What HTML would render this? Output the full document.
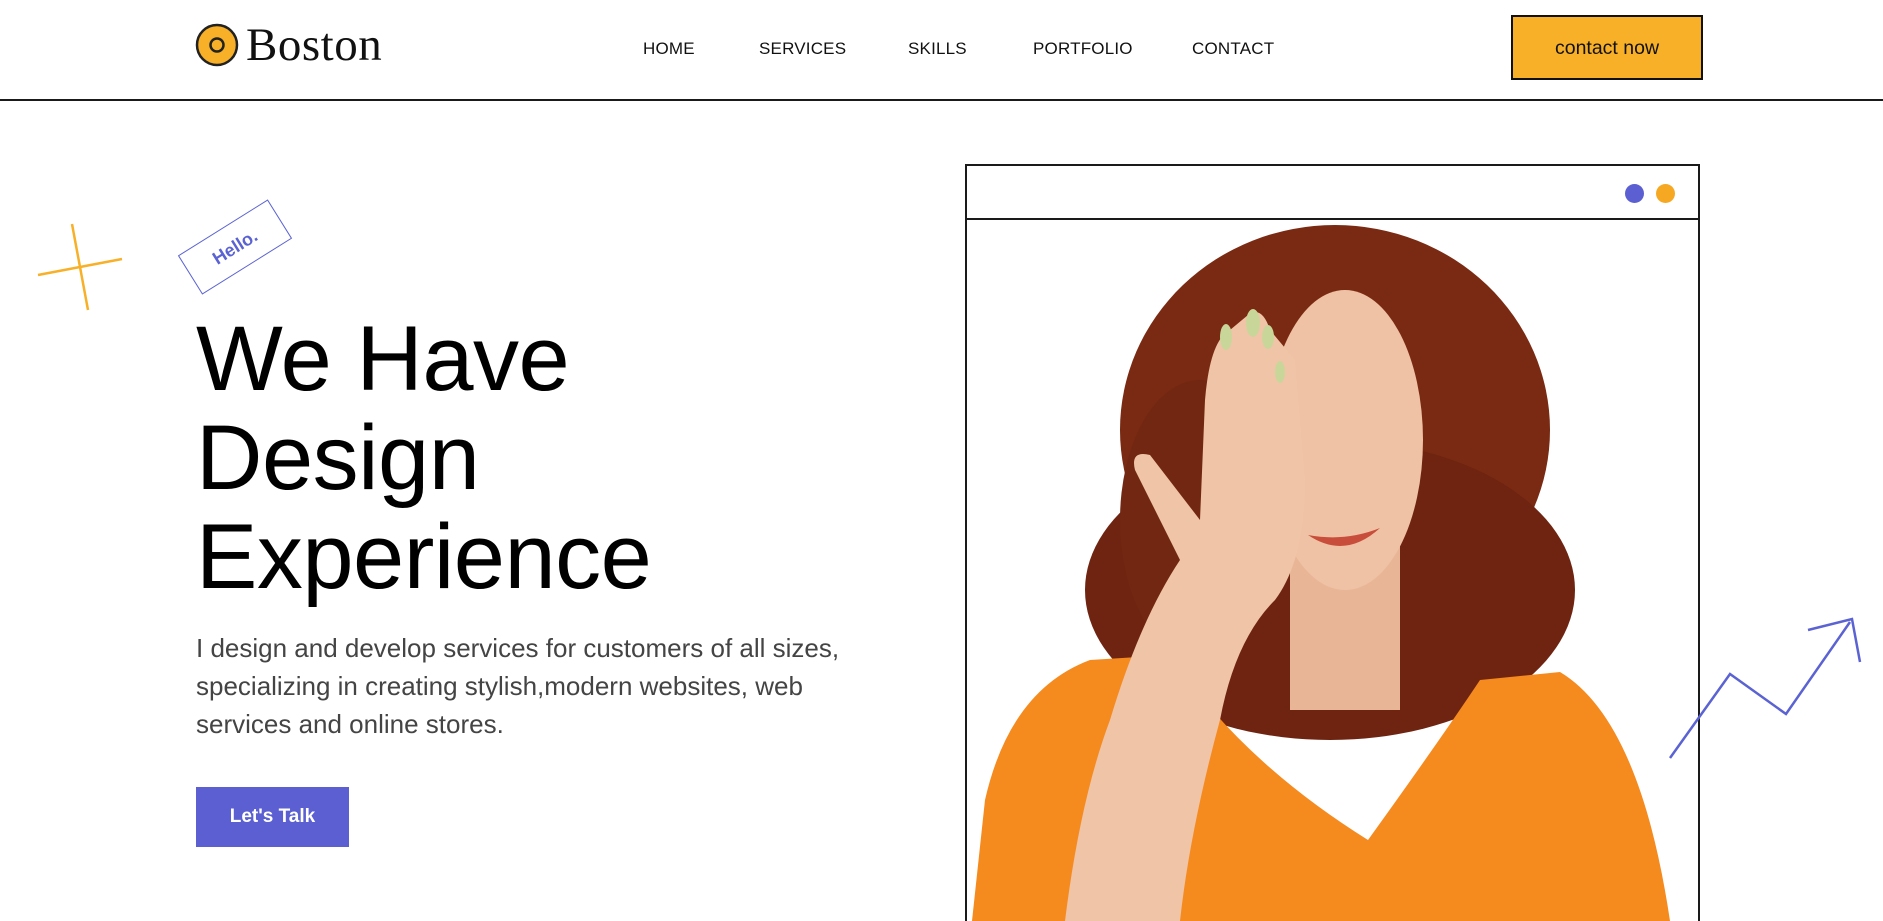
<!DOCTYPE html>
<html style="height:921px;overflow:hidden"><head><meta charset="utf-8">
<style>
*{margin:0;padding:0;box-sizing:border-box}
html,body{width:1883px;height:921px;overflow:hidden;background:#fff}
body{font-family:"Liberation Sans",sans-serif;color:#000}
#w{position:relative;width:1883px;height:921px;overflow:hidden}
.abs{position:absolute}
.nav a{position:absolute;top:39px;font-size:17px;color:#111;text-decoration:none;letter-spacing:0.2px}
h1{position:absolute;left:196px;top:310px;font-size:92px;line-height:99px;font-weight:normal;letter-spacing:-0.5px}
p.t{position:absolute;left:196px;top:629px;font-size:26px;line-height:38px;color:#444;width:760px}
</style></head><body><div id="w">
<svg class="abs" style="left:194px;top:22px" width="46" height="46" viewBox="0 0 46 46">
<circle cx="23" cy="23" r="20" fill="#f7b027" stroke="#222" stroke-width="2.5"/>
<circle cx="23" cy="23" r="6.5" fill="none" stroke="#222" stroke-width="2.5"/>
</svg>
<div class="abs" style="left:246px;top:18px;font-family:'Liberation Serif',serif;font-size:47px;font-weight:300;color:#111;letter-spacing:0.5px">Boston</div>
<div class="nav">
<a style="left:643px">HOME</a>
<a style="left:759px">SERVICES</a>
<a style="left:908px">SKILLS</a>
<a style="left:1033px">PORTFOLIO</a>
<a style="left:1192px">CONTACT</a>
</div>
<div class="abs" style="left:1511px;top:15px;width:192px;height:65px;background:#f7b027;border:2px solid #111;font-size:19.5px;color:#111;text-align:center;line-height:63px">contact now</div>
<div class="abs" style="left:0;top:99px;width:1883px;height:2px;background:#1a1a1a"></div>

<div class="abs" style="left:182px;top:224px;width:106px;height:46px;border:1px solid #5b63d3;transform:rotate(-32deg);color:#5b63d3;font-size:18px;text-align:center;line-height:44px;font-weight:bold">Hello.</div>

<h1>We Have<br>Design<br>Experience</h1>
<p class="t">I design and develop services for customers of all sizes,<br>specializing in creating stylish,modern websites, web<br>services and online stores.</p>
<div class="abs" style="left:196px;top:787px;width:153px;height:60px;background:#5b5fd1;color:#fff;font-size:19px;font-weight:bold;text-align:center;line-height:60px">Let's Talk</div>

<div class="abs" style="left:965px;top:164px;width:735px;height:757px;border:2px solid #1a1a1a;border-bottom:0;overflow:hidden;background:#fff">
<div style="position:absolute;left:0;top:52px;width:100%;height:2px;background:#1a1a1a"></div>
<div style="position:absolute;left:658px;top:18px;width:19px;height:19px;border-radius:50%;background:#5b5fd1"></div>
<div style="position:absolute;left:689px;top:18px;width:19px;height:19px;border-radius:50%;background:#f7a823"></div>
<svg style="position:absolute;left:-967px;top:-166px" width="1883" height="921">
<ellipse cx="1335" cy="430" rx="215" ry="205" fill="#7a2a12"/>
<ellipse cx="1330" cy="590" rx="245" ry="150" fill="#6e2410"/>
<ellipse cx="1200" cy="520" rx="80" ry="140" fill="#722712"/>
<rect x="1290" y="540" width="110" height="170" fill="#e8b597"/>
<ellipse cx="1345" cy="440" rx="78" ry="150" fill="#efc2a5"/>
<path d="M1308,535 Q1345,560 1380,528 Q1345,542 1308,535Z" fill="#c84d3a"/>
<path d="M972,921 L985,800 Q1010,690 1090,660 L1170,655 Q1240,760 1368,840 Q1440,740 1480,680 L1560,672 Q1640,720 1670,921Z" fill="#f58a1f"/>
<path d="M1065,921 Q1080,800 1110,720 Q1140,620 1180,560 L1135,470 Q1130,450 1150,455 L1200,520 L1205,400 Q1210,340 1230,330 L1248,315 Q1262,305 1270,330 L1295,360 L1305,480 Q1305,560 1275,600 Q1235,640 1220,720 Q1190,830 1180,921Z" fill="#f0c4a6"/>
<ellipse cx="1253" cy="323" rx="7" ry="14" fill="#c9d69a"/>
<ellipse cx="1226" cy="337" rx="6" ry="13" fill="#c9d69a"/>
<ellipse cx="1268" cy="337" rx="6" ry="12" fill="#c9d69a"/>
<ellipse cx="1280" cy="372" rx="5" ry="11" fill="#c9d69a"/>
</svg>
</div>

<svg class="abs" style="left:0;top:0;z-index:5;pointer-events:none" width="1883" height="921">
<line x1="72" y1="224" x2="88" y2="310" stroke="#f7b027" stroke-width="2.5"/>
<line x1="38" y1="275" x2="122" y2="259" stroke="#f7b027" stroke-width="2.5"/>
<polyline points="1670,758 1730,674 1786,714 1850,622" fill="none" stroke="#5b63d3" stroke-width="2.5"/>
<polyline points="1808,630 1852,619 1860,662" fill="none" stroke="#5b63d3" stroke-width="2.5"/>
</svg>
</div></body></html>
